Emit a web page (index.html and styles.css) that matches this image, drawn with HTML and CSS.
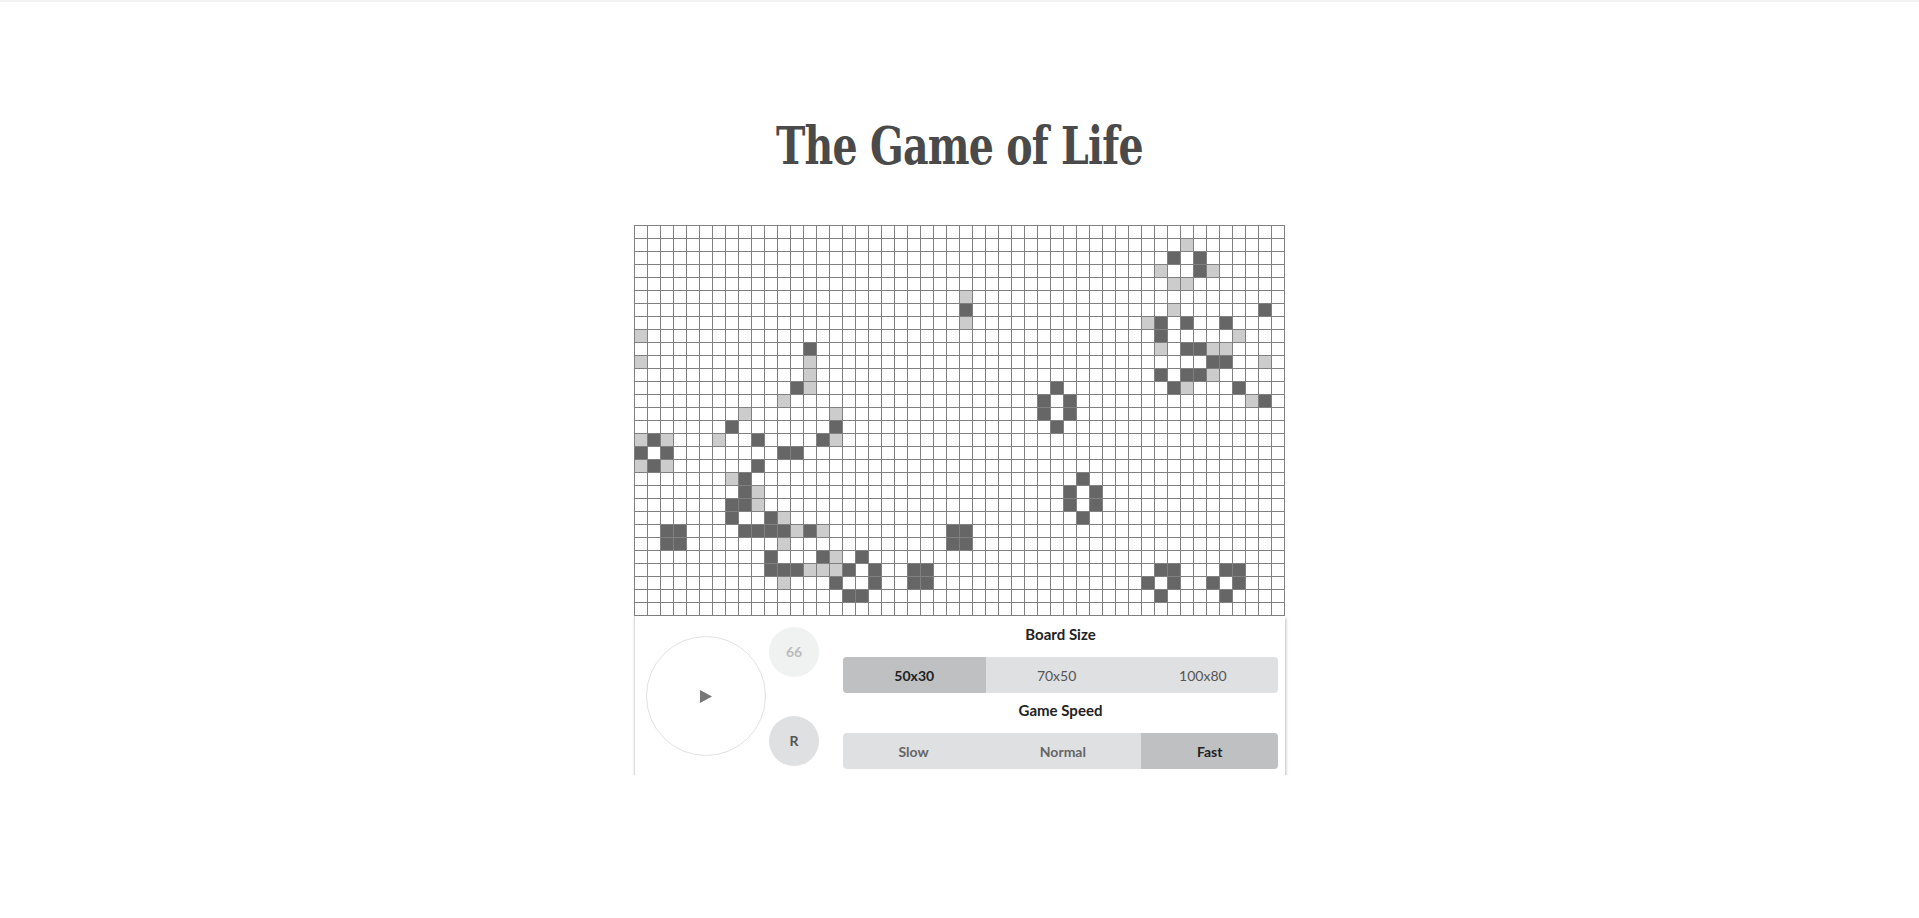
FILE: index.html
```html
<!DOCTYPE html>
<html lang="en">
<head>
    <meta charset="UTF-8">
    <meta name="viewport" content="width=device-width, initial-scale=1.0">
    <title>The Game of Life</title>
    <link rel="stylesheet" href="styles.css">
</head>
<body>
    <div class="top-bar"></div>
    <h1 class="title"><span class="title-text">The Game of Life</span></h1>

    <div class="game">
      <div id="board" class="board"></div>

      <div class="panel">
        <button class="play-btn" aria-label="Play">
          <svg width="12" height="13" viewBox="0 0 12 13"><polygon points="0,0 12,6.5 0,13" fill="#777"/></svg>
        </button>

        <div class="side">
          <div class="round-btn generation">66</div>
          <button class="round-btn reset">R</button>
        </div>

        <div class="settings">
          <div class="label">Board Size</div>
          <div class="btn-group">
            <button class="seg selected">50x30</button>
            <button class="seg">70x50</button>
            <button class="seg">100x80</button>
          </div>
          <div class="label second">Game Speed</div>
          <div class="btn-group speed">
            <button class="seg">Slow</button>
            <button class="seg">Normal</button>
            <button class="seg selected">Fast</button>
          </div>
        </div>
      </div>
    </div>

    <script>
      const cols = 50;
      const rows = 30;

      // live cells, by row
      const alive = {
        2: [41, 43], 3: [43], 6: [25, 48], 7: [40, 42, 45], 8: [40],
        9: [13, 42, 43], 10: [44, 45], 11: [40, 42, 43], 12: [12, 32, 41, 46],
        13: [31, 33, 48], 14: [31, 33], 15: [7, 15, 32], 16: [1, 9, 14],
        17: [0, 2, 11, 12], 18: [1, 9], 19: [8, 34], 20: [8, 33, 35],
        21: [7, 8, 33, 35], 22: [7, 10, 34], 23: [2, 3, 8, 9, 10, 11, 13, 24, 25],
        24: [2, 3, 24, 25], 25: [10, 14, 17],
        26: [10, 11, 12, 16, 18, 21, 22, 40, 41, 45, 46],
        27: [15, 18, 21, 22, 39, 41, 44, 46], 28: [16, 17, 40, 45]
      };

      // cells that just died
      const dying = {
        1: [42], 3: [40, 44], 4: [41, 42], 5: [25], 6: [41], 7: [25, 39],
        8: [0, 46], 9: [40, 44, 45], 10: [0, 13, 48], 11: [13, 44], 12: [13, 42],
        13: [11, 47], 14: [8, 15], 16: [0, 2, 6, 15], 18: [0, 2], 19: [7],
        20: [9], 21: [9], 22: [11], 23: [12, 14], 24: [11], 25: [15],
        26: [13, 14, 15], 27: [11]
      };

      const board = document.getElementById('board');
      let html = '';
      for (let r = 0; r < rows; r++) {
        for (let c = 0; c < cols; c++) {
          let cls = 'cell';
          if ((alive[r] || []).includes(c)) cls += ' alive';
          else if ((dying[r] || []).includes(c)) cls += ' dead';
          html += `<div class="${cls}"></div>`;
        }
      }
      board.innerHTML = html;
    </script>
</body>
</html>
```

FILE: styles.css
```css
body {
  margin: 0;
  padding: 0;
  background-color: #fff;
  font-family: Lato, "Open Sans", sans-serif;
}
.top-bar {
  height: 2px;
  background-color: #f2f2f2;
}
.title {
  margin: 0;
  padding-top: 114px;
  height: 109px;
  font-family: "DejaVu Serif", serif;
  font-size: 52px;
  line-height: 60px;
  font-weight: bold;
  color: #4a4a4a;
  text-align: center;
  letter-spacing: -1px;
}
/* no condensed slab font available, squeeze the serif a bit */
.title-text {
  display: inline-block;
  transform: scaleX(0.76);
}
.game {
  width: 651px;
  margin: 0 auto;
}
.board {
  display: grid;
  grid-template-columns: repeat(50, 12px);
  grid-auto-rows: 12px;
  gap: 1px;
  padding: 1px;
  background-color: #808080;
}
.cell {
  background-color: #fff;
}
.cell.alive {
  background-color: #666;
}
.cell.dead {
  background-color: #ccc;
}
.panel {
  display: flex;
  align-items: center;
  padding: 7px 7px 6px 11px;
  background-color: #fff;
  box-shadow: 1px 2px 3px rgba(0, 0, 0, 0.25);
  border-left: 1px solid #ddd;
}
button {
  font-family: inherit;
  border: none;
  padding: 0;
  cursor: pointer;
}
.play-btn {
  width: 120px;
  height: 120px;
  border-radius: 50%;
  border: 1px solid #e2e2e2;
  background-color: #fff;
  display: flex;
  align-items: center;
  justify-content: center;
}
.side {
  display: flex;
  flex-direction: column;
  gap: 39px;
  margin-left: 3px;
}
.round-btn {
  width: 50px;
  height: 50px;
  border-radius: 50%;
  display: flex;
  align-items: center;
  justify-content: center;
  font-size: 14px;
  font-weight: bold;
}
.generation {
  background-color: #f0f1f1;
  color: #bbb;
}
.reset {
  background-color: #dfe0e2;
  color: #555;
}
.settings {
  flex: 1;
  margin-left: 24px;
}
.label {
  text-align: center;
  font-size: 15px;
  font-weight: bold;
  line-height: 22px;
  color: #222;
  margin-bottom: 12px;
}
.label.second {
  margin-top: 6px;
}
.btn-group {
  display: flex;
  height: 36px;
  border-radius: 4px;
  overflow: hidden;
  background-color: #dfe0e2;
}
.seg {
  flex: 1 1 auto;
  background-color: transparent;
  font-size: 14px;
  color: #555;
}
.speed .seg {
  font-weight: bold;
  color: #666;
}
.seg.selected {
  background-color: #bfc0c2;
  color: #222;
  font-weight: bold;
}
```
